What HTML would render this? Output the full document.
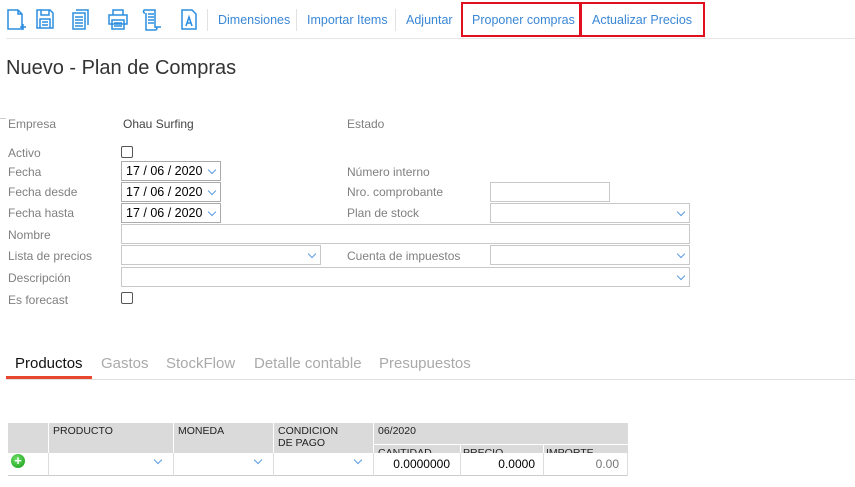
<!DOCTYPE html>
<html><head><meta charset="utf-8"><style>
*{box-sizing:border-box;margin:0;padding:0}
body{width:855px;height:487px;background:#fff;position:relative;overflow:hidden;font-family:"Liberation Sans",Tahoma,sans-serif}
.a{position:absolute}
.lnk{position:absolute;top:13px;font-size:12.5px;color:#3a87d6}
.sep{position:absolute;top:9px;width:1px;height:22px;background:#e2e2e2}
.lbl{position:absolute;left:8px;font-size:12px;color:#808080}
.lbl2{position:absolute;left:347px;font-size:12px;color:#808080}
.box{position:absolute;border:1px solid #c8c8c8;background:#fff;height:20px}
.dt{font-size:12.5px;color:#000;padding:2px 0 0 4px;border-color:#aaa}
.chev{position:absolute;right:5px;top:5px;width:6px;height:6px;border-right:1px solid #5b9be0;border-bottom:1px solid #5b9be0;transform:rotate(45deg)}
.cb{position:absolute;left:121px;width:12px;height:12px;border:1px solid #555;border-radius:2px}
.tab{position:absolute;top:355px;font-size:15px;color:#aaa}
.th{position:absolute;font-size:10.5px;color:#222}
.cell{position:absolute;top:453px;height:23px;border-left:1px solid #ddd;border-bottom:1px solid #ccc;background:#fff;font-size:12px;text-align:right;padding:4px 8px 0 0}
</style></head><body>
<svg class="a" style="left:0;top:0" width="210" height="36" viewBox="0 0 210 36" fill="none" stroke="#2b8de0" stroke-width="1.5">
<path d="M8 10h10l4 4v15H8z M18 10v4h4"/><path d="M20 27h6M23 24v6"/>
<path d="M37 10h13l3 3v15H37z M41 10v5h8v-5 M40 19h10v9H40z M42 22h6M42 25h6"/>
<path d="M76 10h12v15 M73 13h12v16H73z M75 17h8M75 20h8M75 23h8M75 26h8"/>
<path d="M113 10h10v5h-10z M109 15h18v9h-18z M112 20h12v9h-12z M114 23h8M114 26h8"/>
<path d="M145 10h10v17h6 M145 10c-2 0-2 3 0 3 M148 14h6M148 17h6M148 20h6M148 23h6 M155 27c2 0 3 3 0 3h-9v-17"/>
<path d="M182 10h10l4 4v15H182z M186 26l3-9 3 9 M187 23h4"/>
</svg>
<div class="sep" style="left:207px"></div>
<div class="lnk" style="left:218px">Dimensiones</div>
<div class="sep" style="left:296px"></div>
<div class="lnk" style="left:307px">Importar Items</div>
<div class="sep" style="left:395px"></div>
<div class="lnk" style="left:406px">Adjuntar</div>
<div class="a" style="left:461px;top:2px;width:120px;height:35px;border:2px solid #e0101e"></div>
<div class="lnk" style="left:472px">Proponer compras</div>
<div class="a" style="left:580px;top:2px;width:125px;height:35px;border:2px solid #e0101e"></div>
<div class="lnk" style="left:592px">Actualizar Precios</div>
<div class="a" style="left:6px;top:38px;width:849px;height:1px;background:#e6e6e6"></div>
<div class="a" style="left:6px;top:57px;font-size:20px;color:#333">Nuevo - Plan de Compras</div>
<div class="a" style="left:0;top:113px;width:6px;height:6px;border-bottom:1px solid #ccc"></div>

<div class="lbl" style="top:117px">Empresa</div>
<div class="a" style="left:123px;top:117px;font-size:12px;color:#444">Ohau Surfing</div>
<div class="lbl2" style="top:117px">Estado</div>
<div class="lbl" style="top:146px">Activo</div><div class="cb" style="top:146px"></div>
<div class="lbl" style="top:165px">Fecha</div>
<div class="lbl" style="top:185px">Fecha desde</div>
<div class="lbl" style="top:206px">Fecha hasta</div>
<div class="lbl" style="top:228px">Nombre</div>
<div class="lbl" style="top:249px">Lista de precios</div>
<div class="lbl" style="top:271px">Descripción</div>
<div class="lbl" style="top:293px">Es forecast</div><div class="cb" style="top:292px"></div>
<div class="lbl2" style="top:165px">Número interno</div>
<div class="lbl2" style="top:185px">Nro. comprobante</div>
<div class="lbl2" style="top:206px">Plan de stock</div>
<div class="lbl2" style="top:249px">Cuenta de impuestos</div>

<div class="box dt" style="left:121px;top:161px;width:100px">17 / 06 / 2020<div class="chev"></div></div>
<div class="box dt" style="left:121px;top:182px;width:100px">17 / 06 / 2020<div class="chev"></div></div>
<div class="box dt" style="left:121px;top:203px;width:100px">17 / 06 / 2020<div class="chev"></div></div>
<div class="box" style="left:490px;top:182px;width:120px"></div>
<div class="box" style="left:490px;top:203px;width:200px"><div class="chev"></div></div>
<div class="box" style="left:121px;top:224px;width:569px"></div>
<div class="box" style="left:121px;top:245px;width:200px"><div class="chev"></div></div>
<div class="box" style="left:490px;top:245px;width:200px"><div class="chev"></div></div>
<div class="box" style="left:121px;top:267px;width:569px"><div class="chev"></div></div>

<div class="tab" style="left:15px;color:#111">Productos</div>
<div class="tab" style="left:101px">Gastos</div>
<div class="tab" style="left:166px">StockFlow</div>
<div class="tab" style="left:254px">Detalle contable</div>
<div class="tab" style="left:379px">Presupuestos</div>
<div class="a" style="left:6px;top:379px;width:849px;height:1px;background:#e0e0e0"></div>
<div class="a" style="left:6px;top:376px;width:86px;height:3px;background:#e8472f"></div>

<div class="a" style="left:8px;top:423px;width:620px;height:30px;background:#dadada"></div>
<div class="a" style="left:48px;top:423px;width:1px;height:30px;background:#fff"></div>
<div class="a" style="left:173px;top:423px;width:1px;height:30px;background:#fff"></div>
<div class="a" style="left:273px;top:423px;width:1px;height:30px;background:#fff"></div>
<div class="a" style="left:373px;top:423px;width:1px;height:30px;background:#fff"></div>
<div class="a" style="left:373px;top:444px;width:255px;height:1px;background:#fff"></div>
<div class="a" style="left:460px;top:444px;width:1px;height:9px;background:#fff"></div>
<div class="a" style="left:543px;top:444px;width:1px;height:9px;background:#fff"></div>
<div class="th" style="left:53px;top:425px">PRODUCTO</div>
<div class="th" style="left:178px;top:425px">MONEDA</div>
<div class="th" style="left:278px;top:425px;line-height:12px">CONDICION<br>DE PAGO</div>
<div class="th" style="left:378px;top:425px">06/2020</div>
<div class="a" style="left:373px;top:445px;width:255px;height:8px;overflow:hidden"><div class="th" style="left:5px;top:2px">CANTIDAD</div><div class="th" style="left:90px;top:2px">PRECIO</div><div class="th" style="left:173px;top:2px">IMPORTE</div></div>
<div class="a" style="left:8px;top:453px;width:620px;height:23px;border-bottom:1px solid #ccc"></div>
<div class="a" style="left:11px;top:454px;width:14px;height:14px;border-radius:50%;background:radial-gradient(circle at 40% 35%,#6fe06a,#139a13);color:#fff;font-size:13px;font-weight:bold;line-height:14px;text-align:center">+</div>
<div class="cell" style="left:48px;width:125px"><div class="chev" style="right:12px;top:4px"></div></div>
<div class="cell" style="left:173px;width:100px"><div class="chev" style="right:12px;top:4px"></div></div>
<div class="cell" style="left:273px;width:100px"><div class="chev" style="right:12px;top:4px"></div></div>
<div class="cell" style="left:373px;width:87px;padding-right:10px">0.0000000</div>
<div class="cell" style="left:460px;width:83px;padding-right:8px">0.0000</div>
<div class="cell" style="left:543px;width:85px;padding-right:8px;color:#777;border-right:1px solid #ddd">0.00</div>
</body></html>
